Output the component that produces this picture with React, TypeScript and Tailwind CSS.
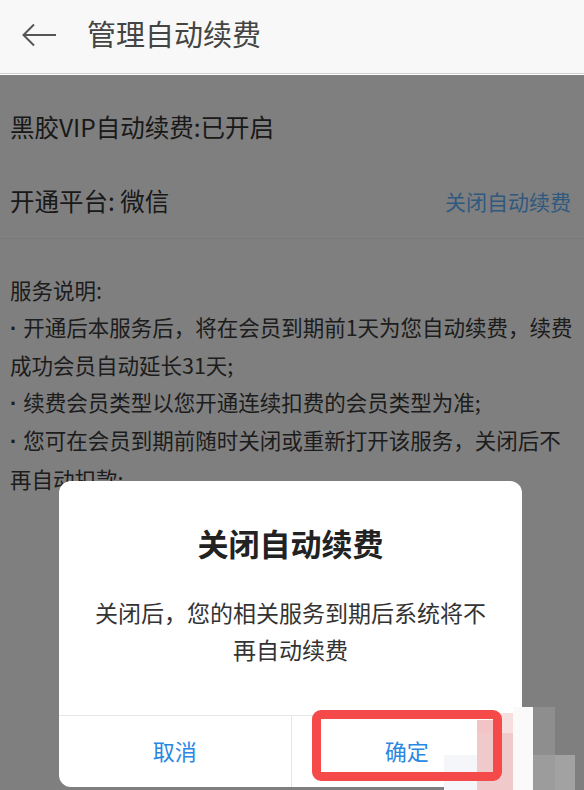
import React from 'react';

// Mosaic tiles left over from a scrubbed watermark in the lower right corner
const tiles: { cls: string }[] = [
  { cls: 'left-[444px] top-[755px] w-[33px] h-[35px] bg-[#f4f6f9]' },
  { cls: 'left-[477px] top-[720px] w-[20px] h-[13px] bg-[#f2c4c6]' },
  { cls: 'left-[497px] top-[713px] w-[16px] h-[20px] bg-[#f7dfe0]' },
  { cls: 'left-[477px] top-[733px] w-[36px] h-[57px] bg-[#f0c9cb]' },
  { cls: 'left-[513px] top-[707px] w-[20px] h-[83px] bg-[#fafafa]' },
  { cls: 'left-[533px] top-[707px] w-[22px] h-[48px] bg-[#8e8e8e]' },
  { cls: 'left-[533px] top-[755px] w-[22px] h-[35px] bg-[#9c9c9c]' },
  { cls: 'left-[555px] top-[755px] w-[20px] h-[35px] bg-[#a2a2a2]' },
];

const BackArrow = () => (
  <svg width="36" height="24" viewBox="0 0 36 24" fill="none">
    <path d="M13 1.5 L2.5 12 L13 22.5 M2.5 12 H35" stroke="#555" strokeWidth="2" />
  </svg>
);

// Narrow latin middle dot instead of the full-width CJK one
const Dot = () => <span className="font-['Liberation_Sans',sans-serif] font-bold">·&nbsp;</span>;

export default function App() {
  return (
    <div className="relative w-[584px] h-[790px] overflow-hidden bg-white font-['Noto_Sans_CJK_SC',sans-serif]">
      {/* Title bar */}
      <header className="h-[74px] bg-[#f8f8f8] border-b border-[#cfcfcf] flex items-center pb-[8px]">
        <div className="ml-[21px] mt-[4px]">
          <BackArrow />
        </div>
        <h1 className="ml-[30px] text-[29px] leading-[36px] text-[#444]">管理自动续费</h1>
      </header>

      {/* Subscription info */}
      <main className="text-[#333]">
        <div className="pl-[10px] pt-[37px] text-[24.5px] leading-[32px]">黑胶VIP自动续费:已开启</div>
        <div className="flex items-center justify-between pl-[10px] pr-[13px] pt-[42px] pb-[21px] border-b border-[#f2f2f2]">
          <span className="text-[24.5px] leading-[32px]">开通平台: 微信</span>
          <span className="text-[21px] leading-[30px] text-[#5fb2ff]">关闭自动续费</span>
        </div>
        <div className="pl-[10px] pt-[33px] text-[21.5px] leading-[36.5px] text-[#3a3a3a]">
          <p>服务说明:</p>
          <p>
            <Dot />开通后本服务后，将在会员到期前1天为您自动续费，续费
            <br />
            成功会员自动延长31天;
          </p>
          <p>
            <Dot />续费会员类型以您开通连续扣费的会员类型为准;
          </p>
          <p>
            <Dot />您可在会员到期前随时关闭或重新打开该服务，关闭后不
            <br />
            再自动扣款;
          </p>
        </div>
      </main>

      {/* Dim layer under the dialog */}
      <div className="absolute left-0 right-0 top-[75px] bottom-0 bg-black/50" />

      {/* Confirm dialog */}
      <div className="absolute left-[59px] top-[481px] w-[463px] rounded-[12px] bg-white">
        <div className="h-[234px] pt-[42px] text-center">
          <h2 className="text-[31px] leading-[40px] font-bold text-[#222]">关闭自动续费</h2>
          <p className="mt-[31px] text-[23px] leading-[37px] text-[#333]">
            关闭后，您的相关服务到期后系统将不
            <br />
            再自动续费
          </p>
        </div>
        <div className="h-[72px] grid grid-cols-2 border-t border-[#e6e6e6] text-[22px] text-[#2a87e2]">
          <button className="flex items-center justify-center pb-[2px]">取消</button>
          <button className="flex items-center justify-center pb-[2px] border-l border-[#e6e6e6]">确定</button>
        </div>
      </div>

      {tiles.map((t, i) => (
        <div key={i} className={`absolute ${t.cls}`} />
      ))}

      {/* Highlight around the confirm button */}
      <div className="absolute left-[312px] top-[710px] w-[190px] h-[71px] border-[9px] border-[#f44a4a] rounded-[9px]" />
    </div>
  );
}
